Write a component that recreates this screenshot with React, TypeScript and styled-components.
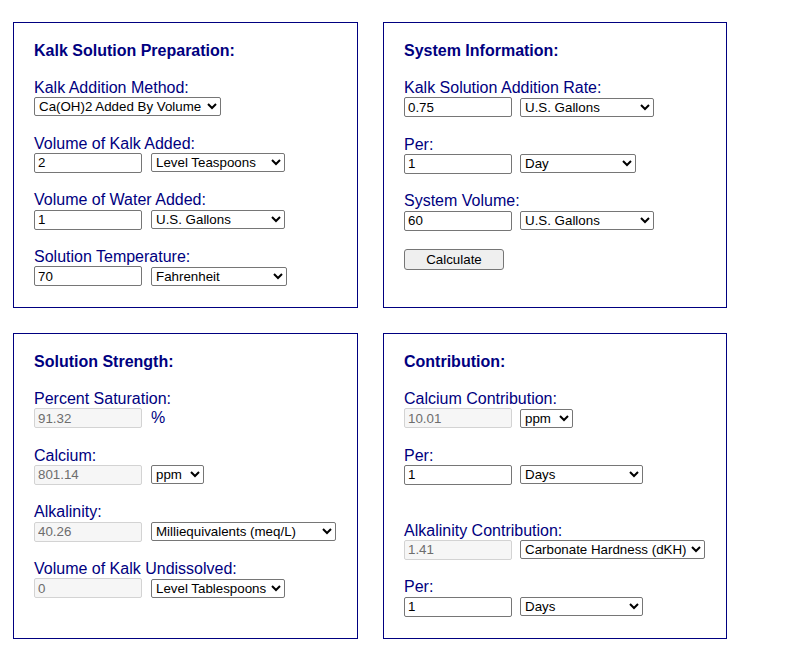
import React from "react";
import styled, { createGlobalStyle } from "styled-components";

const GlobalStyle = createGlobalStyle`
  html, body {
    margin: 0;
    padding: 0;
    background: #ffffff;
  }
  body {
    font-family: "Liberation Sans", Arial, sans-serif;
  }
`;

const Page = styled.div`
  display: grid;
  grid-template-columns: 345px 344px;
  grid-template-rows: 286px 306px;
  column-gap: 25px;
  row-gap: 25px;
  padding: 22px 0 26px 13px;
`;

const Panel = styled.section`
  box-sizing: border-box;
  border: 1px solid #000080;
  padding: 19px 20px 0 20px;
  color: #000080;
  font-size: 16px;
`;

const Title = styled.h2`
  margin: 0 0 18.4px 0;
  font-size: 16px;
  line-height: 18.4px;
  font-weight: bold;
  color: #000080;
`;

const Field = styled.div<{ $extra?: boolean }>`
  margin-bottom: ${(p) => (p.$extra ? "36.6px" : "18.3px")};
`;

const Label = styled.div`
  font-size: 16px;
  line-height: 18.4px;
  color: #000080;
`;

const Row = styled.div<{ $gap: number }>`
  display: flex;
  align-items: center;
  gap: ${(p) => p.$gap}px;
`;

const TextInput = styled.input`
  box-sizing: border-box;
  width: 108px;
  height: 20px;
  margin: 0;
  padding: 1px 3px;
  border: 1px solid #767676;
  border-radius: 2px;
  font-family: "Liberation Sans", Arial, sans-serif;
  font-size: 13.333px;
  color: #000000;
  background: #ffffff;
  outline: none;

  &:read-only {
    background: #f6f6f6;
    border-color: #d3d3d3;
    color: #6d6d6d;
  }
`;

const Select = styled.select<{ $w: number }>`
  box-sizing: border-box;
  width: ${(p) => p.$w}px;
  height: 19px;
  margin: 0;
  border: 1px solid #767676;
  border-radius: 2px;
  font-family: "Liberation Sans", Arial, sans-serif;
  font-size: 13.333px;
  color: #000000;
  background-color: #ffffff;
`;

const Unit = styled.span`
  font-size: 16px;
  line-height: 18.4px;
  color: #000080;
`;

const Button = styled.button`
  box-sizing: border-box;
  width: 100px;
  height: 21px;
  margin: 0;
  padding: 0;
  border: 1px solid #767676;
  border-radius: 3px;
  background: #efefef;
  font-family: "Liberation Sans", Arial, sans-serif;
  font-size: 13.333px;
  color: #000000;
`;

type Opt = string[];

const Drop = ({ w, options, value }: { w: number; options: Opt; value: string }) => (
  <Select $w={w} defaultValue={value}>
    {options.map((o) => (
      <option key={o} value={o}>
        {o}
      </option>
    ))}
  </Select>
);

const volumes = ["Level Teaspoons", "Level Tablespoons", "Grams", "Cups"];
const liquids = ["U.S. Gallons", "Liters", "Imperial Gallons"];
const periods = ["Day", "Week", "Hour"];
const periodsPl = ["Days", "Weeks", "Hours"];
const concs = ["ppm", "mg/L"];
const alks = ["Milliequivalents (meq/L)", "Carbonate Hardness (dKH)", "ppm CaCO3"];

export default function App() {
  return (
    <>
      <GlobalStyle />
      <Page>
        <Panel>
          <Title>Kalk Solution Preparation:</Title>
          <Field>
            <Label>Kalk Addition Method:</Label>
            <Row $gap={9}>
              <Drop
                w={187}
                value="Ca(OH)2 Added By Volume"
                options={["Ca(OH)2 Added By Volume", "Ca(OH)2 Added By Weight"]}
              />
            </Row>
          </Field>
          <Field>
            <Label>Volume of Kalk Added:</Label>
            <Row $gap={9}>
              <TextInput defaultValue="2" />
              <Drop w={134} value="Level Teaspoons" options={volumes} />
            </Row>
          </Field>
          <Field>
            <Label>Volume of Water Added:</Label>
            <Row $gap={9}>
              <TextInput defaultValue="1" />
              <Drop w={134} value="U.S. Gallons" options={liquids} />
            </Row>
          </Field>
          <Field>
            <Label>Solution Temperature:</Label>
            <Row $gap={9}>
              <TextInput defaultValue="70" />
              <Drop w={136} value="Fahrenheit" options={["Fahrenheit", "Celsius"]} />
            </Row>
          </Field>
        </Panel>

        <Panel>
          <Title>System Information:</Title>
          <Field>
            <Label>Kalk Solution Addition Rate:</Label>
            <Row $gap={8}>
              <TextInput defaultValue="0.75" />
              <Drop w={134} value="U.S. Gallons" options={liquids} />
            </Row>
          </Field>
          <Field>
            <Label>Per:</Label>
            <Row $gap={8}>
              <TextInput defaultValue="1" />
              <Drop w={116} value="Day" options={periods} />
            </Row>
          </Field>
          <Field>
            <Label>System Volume:</Label>
            <Row $gap={8}>
              <TextInput defaultValue="60" />
              <Drop w={134} value="U.S. Gallons" options={liquids} />
            </Row>
          </Field>
          <Button type="button">Calculate</Button>
        </Panel>

        <Panel>
          <Title>Solution Strength:</Title>
          <Field>
            <Label>Percent Saturation:</Label>
            <Row $gap={9}>
              <TextInput readOnly defaultValue="91.32" />
              <Unit>%</Unit>
            </Row>
          </Field>
          <Field>
            <Label>Calcium:</Label>
            <Row $gap={9}>
              <TextInput readOnly defaultValue="801.14" />
              <Drop w={53} value="ppm" options={concs} />
            </Row>
          </Field>
          <Field>
            <Label>Alkalinity:</Label>
            <Row $gap={9}>
              <TextInput readOnly defaultValue="40.26" />
              <Drop w={185} value="Milliequivalents (meq/L)" options={alks} />
            </Row>
          </Field>
          <Field>
            <Label>Volume of Kalk Undissolved:</Label>
            <Row $gap={9}>
              <TextInput readOnly defaultValue="0" />
              <Drop w={134} value="Level Tablespoons" options={volumes} />
            </Row>
          </Field>
        </Panel>

        <Panel>
          <Title>Contribution:</Title>
          <Field>
            <Label>Calcium Contribution:</Label>
            <Row $gap={8}>
              <TextInput readOnly defaultValue="10.01" />
              <Drop w={53} value="ppm" options={concs} />
            </Row>
          </Field>
          <Field $extra>
            <Label>Per:</Label>
            <Row $gap={8}>
              <TextInput defaultValue="1" />
              <Drop w={123} value="Days" options={periodsPl} />
            </Row>
          </Field>
          <Field>
            <Label>Alkalinity Contribution:</Label>
            <Row $gap={8}>
              <TextInput readOnly defaultValue="1.41" />
              <Drop w={185} value="Carbonate Hardness (dKH)" options={alks} />
            </Row>
          </Field>
          <Field>
            <Label>Per:</Label>
            <Row $gap={8}>
              <TextInput defaultValue="1" />
              <Drop w={123} value="Days" options={periodsPl} />
            </Row>
          </Field>
        </Panel>
      </Page>
    </>
  );
}
